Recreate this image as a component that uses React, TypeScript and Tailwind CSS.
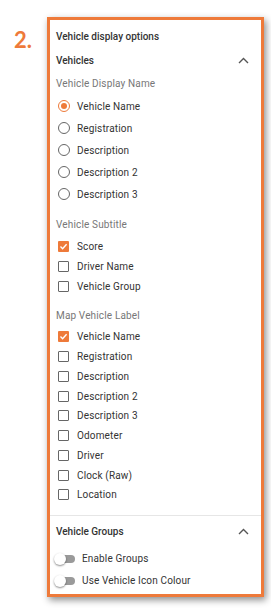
import React from "react";

const F = { fontFamily: "Roboto, 'Noto Sans', sans-serif" };

function Chevron() {
  return (
    <svg width="11" height="7" viewBox="0 0 11 7" className="mr-[12px]">
      <path d="M1 6 L5.5 1.5 L10 6" fill="none" stroke="#555" strokeWidth="1.4" />
    </svg>
  );
}

function Radio({ label, checked }: { label: string; checked?: boolean }) {
  return (
    <div className="flex h-[22px] items-center pl-[8px]">
      {checked ? (
        <span className="flex h-[12px] w-[12px] items-center justify-center rounded-full border-[1.5px] border-[#EE7A3A]">
          <span className="h-[6px] w-[6px] rounded-full bg-[#EE7A3A]" />
        </span>
      ) : (
        <span className="h-[12px] w-[12px] rounded-full border-[1.5px] border-[#666]" />
      )}
      <span className="ml-[7px] text-[10px] tracking-[0.15px] text-[#333]">{label}</span>
    </div>
  );
}

function Check({ label, checked, h }: { label: string; checked?: boolean; h: string }) {
  return (
    <div className={`flex items-center pl-[8px] ${h}`}>
      {checked ? (
        <span className="flex h-[11px] w-[11px] items-center justify-center rounded-[1px] bg-[#EE7A3A]">
          <svg width="9" height="9" viewBox="0 0 9 9">
            <path d="M1.5 4.6 L3.6 6.7 L7.6 2.2" fill="none" stroke="#fff" strokeWidth="1.4" />
          </svg>
        </span>
      ) : (
        <span className="h-[11px] w-[11px] rounded-[1px] border-[1.5px] border-[#666]" />
      )}
      <span className="ml-[8px] text-[10px] tracking-[0.15px] text-[#333]">{label}</span>
    </div>
  );
}

function Toggle({ label }: { label: string }) {
  return (
    <div className="flex h-[22px] items-center pl-[4px]">
      <span className="relative flex h-[12px] w-[22px] items-center">
        <span className="ml-[4px] h-[8px] w-[17px] rounded-full bg-[#9a9a9a]" />
        <span className="absolute left-0 top-0 h-[12px] w-[12px] rounded-full bg-white shadow-[0_1px_2px_rgba(0,0,0,0.45)]" />
      </span>
      <span className="ml-[6px] text-[10px] tracking-[0.15px] text-[#333]">{label}</span>
    </div>
  );
}

export default function App() {
  const display = ["Vehicle Name", "Registration", "Description", "Description 2", "Description 3"];
  const map = ["Vehicle Name", "Registration", "Description", "Description 2", "Description 3", "Odometer", "Driver", "Clock (Raw)", "Location"];
  return (
    <div className="flex h-[608px] w-[271px] bg-white" style={F}>
      <div className="w-[47px] pl-[14px] pt-[29px]">
        <span className="text-[22px] font-bold leading-none text-[#EE7A3A]" style={{ fontFamily: "Lato, sans-serif" }}>
          2.
        </span>
      </div>
      <div className="mt-[17px] flex h-[580px] w-[217px] flex-col border-[3px] border-[#EE7A3A] bg-white shadow-[2px_3px_7px_rgba(0,0,0,0.45)]">
        <div className="flex h-[29px] items-center pl-[6px] pt-[3px] text-[10px] font-medium text-[#333]">
          Vehicle display options
        </div>
        <div className="flex h-[22px] items-center justify-between pl-[6px] text-[10px] font-medium text-[#333]">
          <span>Vehicles</span>
          <Chevron />
        </div>
        <div className="flex h-[24px] items-center pl-[6px] text-[10px] tracking-[0.15px] text-[#777]">Vehicle Display Name</div>
        {display.map((d, i) => (
          <Radio key={d} label={d} checked={i === 0} />
        ))}
        <div className="mt-[7px] flex h-[24px] items-center pl-[6px] text-[10px] tracking-[0.15px] text-[#777]">Vehicle Subtitle</div>
        <Check label="Score" checked h="h-[20px]" />
        <Check label="Driver Name" h="h-[20px]" />
        <Check label="Vehicle Group" h="h-[20px]" />
        <div className="mt-[7px] flex h-[24px] items-center pl-[6px] text-[10px] tracking-[0.15px] text-[#777]">Map Vehicle Label</div>
        {map.map((d, i) => (
          <Check key={d} label={d} checked={i === 0} h="h-[19.75px]" />
        ))}
        <div className="mt-[10px] h-px bg-[#e6e6e6]" />
        <div className="flex h-[32px] items-center justify-between pl-[6px] text-[10px] font-medium text-[#333]">
          <span>Vehicle Groups</span>
          <Chevron />
        </div>
        <Toggle label="Enable Groups" />
        <Toggle label="Use Vehicle Icon Colour" />
      </div>
    </div>
  );
}
